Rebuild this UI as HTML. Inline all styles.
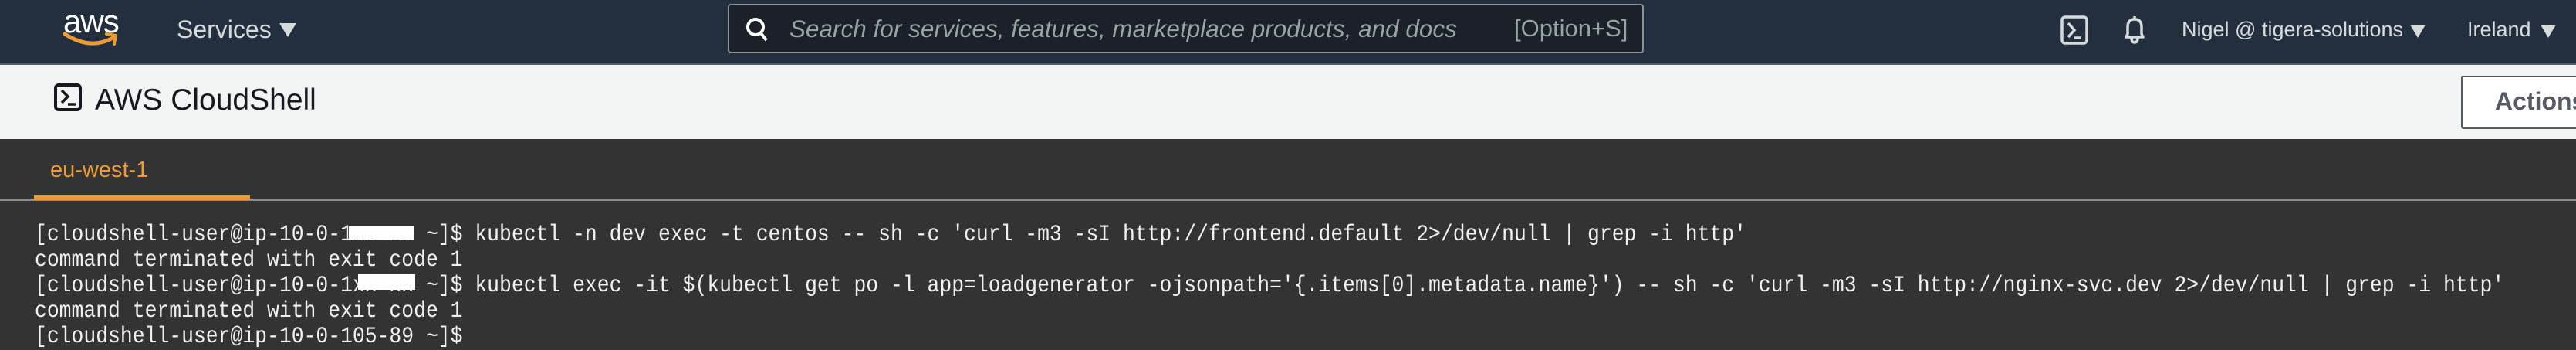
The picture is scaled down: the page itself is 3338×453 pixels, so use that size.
<!DOCTYPE html>
<html><head><meta charset="utf-8"><style>
*{margin:0;padding:0;box-sizing:border-box}
body{width:3338px;height:428px;overflow:hidden;background:#333;font-family:"Liberation Sans",sans-serif;position:relative}
.abs{position:absolute}
#nav{left:0;top:0;width:3338px;height:84px;background:#232f3e;border-bottom:3px solid #545b64}
.nt{color:#d5dbdb;font-size:31px;white-space:nowrap}
#bar{left:0;top:84px;width:3338px;height:96px;background:#f2f3f3}
.term{font-family:"Liberation Mono",monospace;font-size:30px;color:#f0f0f0;white-space:pre;left:45px;line-height:33px;transform:scaleX(0.88);transform-origin:0 0}
</style></head><body>
<div id="nav" class="abs">
  <div class="abs" style="left:82px;top:4px;color:#fff;font-size:42px;letter-spacing:-1px">aws</div>
  <svg class="abs" style="left:80px;top:40px" width="76" height="22"><path d="M4 4 Q38 26 68 8" stroke="#ec9b35" stroke-width="5" fill="none" stroke-linecap="round"/><path d="M58 4 L70 6 L68 17" stroke="#ec9b35" stroke-width="4" fill="none" stroke-linecap="round"/></svg>
  <div class="abs nt" style="left:229px;top:20px;font-size:32px">Services</div>
  <div class="abs" style="left:362px;top:30px;width:0;height:0;border-left:11px solid transparent;border-right:11px solid transparent;border-top:18px solid #d5dbdb"></div>
  <div class="abs" style="left:943px;top:5px;width:1187px;height:64px;background:#1b2029;border:2px solid #879596;border-radius:4px"></div>
  <svg class="abs" style="left:966px;top:22px" width="30" height="32"><circle cx="13" cy="13" r="10" stroke="#fff" stroke-width="4" fill="none"/><path d="M20 21 L27 30" stroke="#fff" stroke-width="4"/></svg>
  <div class="abs nt" style="left:1023px;top:19px;font-style:italic;color:#95a5a6;font-size:31.5px">Search for services, features, marketplace products, and docs</div>
  <div class="abs nt" style="left:1962px;top:19px;color:#95a5a6;font-size:31px">[Option+S]</div>
  <svg class="abs" style="left:2670px;top:20px" width="38" height="38"><rect x="2" y="2" width="32" height="34" rx="4" stroke="#d5dbdb" stroke-width="3.5" fill="none"/><path d="M10 10 L18 19 L10 28 M18 29 L27 29" stroke="#d5dbdb" stroke-width="3.5" fill="none"/></svg>
  <svg class="abs" style="left:2750px;top:19px" width="32" height="40"><path d="M16 2 L16 5 M5 29 L7 25 L7 16 Q7 6 16 6 Q25 6 25 16 L25 25 L27 29 Z M12 30 Q12 36 16 36 Q20 36 20 30" stroke="#d5dbdb" stroke-width="3.5" fill="none" stroke-linejoin="round"/></svg>
  <div class="abs nt" style="left:2827px;top:23px;font-size:27px">Nigel @ tigera-solutions</div>
  <div class="abs" style="left:3123px;top:32px;border-left:10px solid transparent;border-right:10px solid transparent;border-top:17px solid #d5dbdb"></div>
  <div class="abs nt" style="left:3197px;top:23px;font-size:27px">Ireland</div>
  <div class="abs" style="left:3292px;top:32px;border-left:10px solid transparent;border-right:10px solid transparent;border-top:17px solid #d5dbdb"></div>
</div>
<div id="bar" class="abs">
  <svg class="abs" style="left:70px;top:24px" width="36" height="36"><rect x="2" y="2" width="32" height="32" rx="4" stroke="#16191f" stroke-width="4" fill="none"/><path d="M10 9 L18 17 L10 25 M18 27 L28 27" stroke="#16191f" stroke-width="3.5" fill="none"/></svg>
  <div class="abs" style="left:123px;top:24px;font-size:39px;color:#16191f">AWS CloudShell</div>
  <div class="abs" style="left:3189px;top:14px;width:200px;height:69px;background:#fff;border:2px solid #545b64;border-radius:3px"></div>
  <div class="abs" style="left:3233px;top:29px;font-size:32px;font-weight:bold;color:#545b64">Actions</div>
</div>
<div class="abs" style="left:65px;top:204px;color:#ec9b35;font-size:29px">eu-west-1</div>
<div class="abs" style="left:0;top:257px;width:3338px;height:3px;background:#8d8d8d"></div>
<div class="abs" style="left:44px;top:253px;width:280px;height:6px;background:#ec9b35"></div>
<div class="abs term" style="top:288px">[cloudshell-user@ip-10-0-1xx-xx ~]$ kubectl -n dev exec -t centos -- sh -c 'curl -m3 -sI http://frontend.default 2&gt;/dev/null | grep -i http'
command terminated with exit code 1
[cloudshell-user@ip-10-0-1xx-xx ~]$ kubectl exec -it $(kubectl get po -l app=loadgenerator -ojsonpath='{.items[0].metadata.name}') -- sh -c 'curl -m3 -sI http://nginx-svc.dev 2&gt;/dev/null | grep -i http'
command terminated with exit code 1
[cloudshell-user@ip-10-0-105-89 ~]$</div>
<div class="abs" style="left:452px;top:293px;width:84px;height:17px;background:#fff"></div>
<div class="abs" style="left:464px;top:355px;width:74px;height:20px;background:#fff"></div>
</body></html>
